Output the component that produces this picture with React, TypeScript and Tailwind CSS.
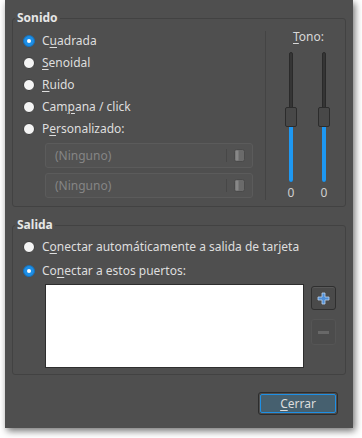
import React from "react";

const font = { fontFamily: '"Noto Sans", "DejaVu Sans", sans-serif' };

function U({ children }: { children: React.ReactNode }) {
  return <span className="underline underline-offset-[2px] decoration-1">{children}</span>;
}

function Radio({ checked }: { checked?: boolean }) {
  if (checked) {
    return (
      <span className="w-[12px] h-[12px] rounded-full bg-[#1d8ee6] border border-[#1670b8] flex items-center justify-center shrink-0">
        <span className="w-[4px] h-[4px] rounded-full bg-white" />
      </span>
    );
  }
  return <span className="w-[12px] h-[12px] rounded-full bg-[#f4f4f4] border border-[#3a3a3a] shrink-0" />;
}

function RadioRow({ checked, children, h }: { checked?: boolean; children: React.ReactNode; h: string }) {
  return (
    <div className={`flex items-center gap-[7px] ${h}`}>
      <Radio checked={checked} />
      <span className="text-[12px] leading-[14px] text-[#dedede]">{children}</span>
    </div>
  );
}

function Combo() {
  return (
    <div className="h-[25px] w-[208px] rounded-[3px] border border-[#5b5b5b] bg-[#525252] flex items-center">
      <span className="flex-1 pl-[9px] text-[12px] text-[#858585]">(Ninguno)</span>
      <span className="w-px h-[13px] bg-[#474747]" />
      <span className="w-[25px] flex items-center justify-center">
        <svg width="11" height="13" viewBox="0 0 11 13">
          <rect x="0.5" y="0.5" width="10" height="12" rx="2" fill="#6a6a6a" stroke="#4a4a4a" />
          <rect x="1.5" y="1.5" width="3" height="10" fill="#888" />
        </svg>
      </span>
    </div>
  );
}

function Slider() {
  return (
    <div className="flex flex-col items-center w-[14px]">
      <div className="relative w-[14px] h-[130px] flex justify-center">
        <div className="w-[4px] h-full rounded-[2px] bg-[#353535] border border-[#2a2a2a]" />
        <div className="absolute left-[5px] top-[73px] w-[4px] h-[57px] rounded-b-[2px] bg-[#1e98f2]" />
        <div className="absolute left-[1px] top-[55px] w-[12px] h-[20px] rounded-[2px] bg-[#484848] border border-[#2c2c2c]" />
      </div>
      <span className="mt-[4px] text-[12px] leading-[14px] text-[#d0d0d0]">0</span>
    </div>
  );
}

export default function App() {
  return (
    <div className="w-[362px] h-[438px] bg-white overflow-hidden" style={font}>
      <div className="ml-[5px] w-[348px] h-[428px] bg-[#4f4f4f] shadow-[2px_3px_7px_rgba(0,0,0,0.55)] flex flex-col px-[7px]">
        <fieldset className="mt-[11px] border border-[#424242] rounded-[3px] h-[196px]">
          <legend className="ml-[2px] px-[2px] text-[12px] leading-[14px] font-bold text-[#e6e6e6]">Sonido</legend>
          <div className="flex h-full">
            <div className="flex flex-col pl-[10px] pt-[5px] w-[252px]">
              <RadioRow checked h="h-[22px]">C<U>u</U>adrada</RadioRow>
              <RadioRow h="h-[22px]"><U>S</U>enoidal</RadioRow>
              <RadioRow h="h-[22px]"><U>R</U>uido</RadioRow>
              <RadioRow h="h-[22px]">Cam<U>p</U>ana / click</RadioRow>
              <RadioRow h="h-[22px]">P<U>e</U>rsonalizado:</RadioRow>
              <div className="flex flex-col gap-[5px] pl-[22px] mt-[3px]">
                <Combo />
                <Combo />
              </div>
            </div>
            <div className="w-px bg-[#444] mt-[6px] h-[169px]" />
            <div className="flex flex-col items-center flex-1 pt-[5px]">
              <span className="text-[12px] leading-[14px] text-[#d8d8d8] ml-[6px]"><U>T</U>ono:</span>
              <div className="flex gap-[19px] mt-[8px] ml-[4px]">
                <Slider />
                <Slider />
              </div>
            </div>
          </div>
        </fieldset>
        <fieldset className="mt-[11px] border border-[#424242] rounded-[3px] h-[157px]">
          <legend className="ml-[2px] px-[2px] text-[12px] leading-[14px] font-bold text-[#e6e6e6]">Salida</legend>
          <div className="flex flex-col pl-[10px] pt-[3px]">
            <RadioRow h="h-[24px]">C<U>o</U>nectar automáticamente a salida de tarjeta</RadioRow>
            <RadioRow checked h="h-[24px]">Co<U>n</U>ectar a estos puertos:</RadioRow>
            <div className="flex mt-[1px] pl-[22px]">
              <div className="w-[259px] h-[84px] bg-white border border-[#2e2e2e]" />
              <div className="flex flex-col gap-[9px] ml-[7px] mt-[2px]">
                <div className="w-[25px] h-[24px] rounded-[3px] border border-[#2f2f2f] bg-[#4a4a4a] flex items-center justify-center shadow-[inset_0_1px_0_rgba(255,255,255,0.08)]">
                  <svg width="13" height="13" viewBox="0 0 13 13">
                    <path d="M5 1h3v4h4v3H8v4H5V8H1V5h4z" fill="#4f8fd8" stroke="#bcd3ee" strokeWidth="0.8" />
                  </svg>
                </div>
                <div className="w-[25px] h-[26px] rounded-[3px] border border-[#555] bg-[#4c4c4c] flex items-center justify-center">
                  <span className="w-[11px] h-[3px] bg-[#686868]" />
                </div>
              </div>
            </div>
          </div>
        </fieldset>
        <div className="flex justify-end mt-[17px] pr-[8px]">
          <div className="w-[80px] h-[23px] rounded-[3px] border border-[#2c2c2c] p-px">
            <div className="w-full h-full border border-[#1e90e6] rounded-[2px] bg-[#46606f] flex items-center justify-center text-[12px] text-[#dcdcdc]">
              <U>C</U>errar
            </div>
          </div>
        </div>
      </div>
    </div>
  );
}
